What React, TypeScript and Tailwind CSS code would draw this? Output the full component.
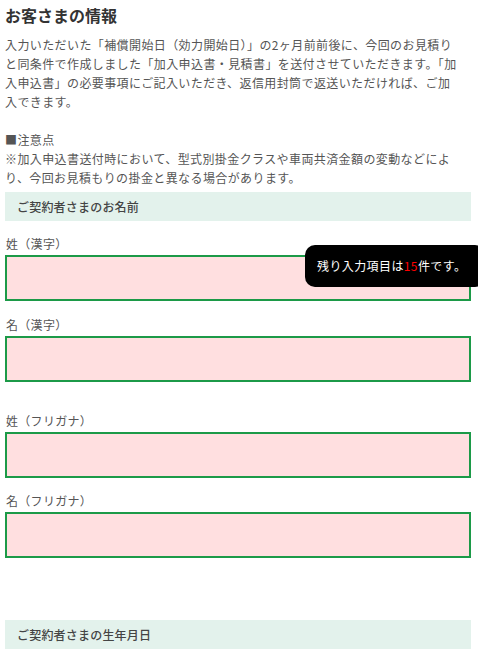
const fieldBox =
  "h-[46px] w-full border-2 border-[#1c9a48] bg-[#ffdfe0]";

function Field({ label, className }: { label: string; className?: string }) {
  return (
    <div className={className}>
      <div className="pl-[1px] text-[12px] leading-[18px] tracking-[0.3px] text-[#555]">{label}</div>
      <div className={"mt-[2px] " + fieldBox} />
    </div>
  );
}

function SectionHead({ title, className }: { title: string; className?: string }) {
  return (
    <div
      className={
        "flex h-[29px] items-center bg-[#e3f2ec] pl-[12px] text-[12px] font-medium tracking-[0.2px] text-[#444] " +
        (className ?? "")
      }
    >
      {title}
    </div>
  );
}

export default function App() {
  return (
    <div
      className="relative h-[655px] w-[478px] overflow-hidden bg-white"
      style={{ fontFamily: '"Noto Sans CJK JP", "Noto Sans", sans-serif' }}
    >
      <div className="ml-[5px] w-[466px]">
        <h1 className="pt-[4px] text-[16px] font-bold leading-[22px] text-[#333]">
          お客さまの情報
        </h1>

        <div className="mt-[9px] whitespace-nowrap text-[12px] leading-[19px] tracking-[0.4px] text-[#555]">
          <p>
            入力いただいた「補償開始日（効力開始日）」の2ヶ月前前後に、今回のお見積り
            <br />
            と同条件で作成しました「加入申込書・見積書」を送付させていただきます。「加
            <br />
            入申込書」の必要事項にご記入いただき、返信用封筒で返送いただければ、ご加
            <br />
            入できます。
          </p>
          <p className="mt-[19px]">
            ■注意点
            <br />
            ※加入申込書送付時において、型式別掛金クラスや車両共済金額の変動などによ
            <br />
            り、今回お見積もりの掛金と異なる場合があります。
          </p>
        </div>

        <SectionHead title="ご契約者さまのお名前" className="mt-[5px]" />

        <Field label="姓（漢字）" className="mt-[14px]" />
        <Field label="名（漢字）" className="mt-[15px]" />
        <Field label="姓（フリガナ）" className="mt-[30px]" />
        <Field label="名（フリガナ）" className="mt-[14px]" />

        <SectionHead title="ご契約者さまの生年月日" className="mt-[62px]" />
      </div>

      {/* remaining-items bubble */}
      <div className="absolute left-[305px] top-[245px] flex h-[42px] w-[180px] items-center rounded-[10px] bg-black pl-[12px] text-[12px] tracking-[0.4px] text-white">
        残り入力項目は<span className="text-[#ff0000]">15</span>件です。
      </div>
    </div>
  );
}
